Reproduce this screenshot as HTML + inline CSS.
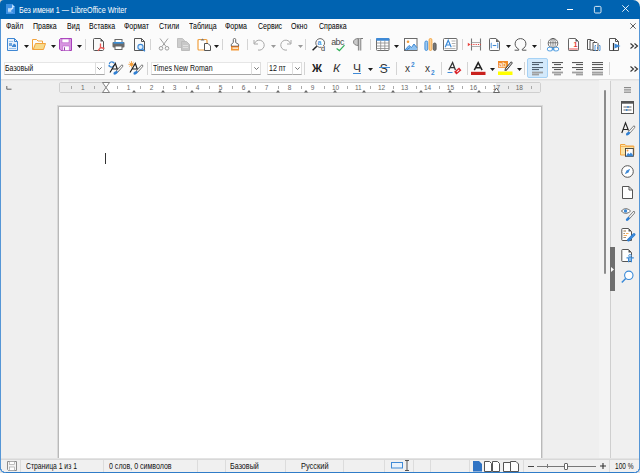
<!DOCTYPE html>
<html><head><meta charset="utf-8">
<style>
*{margin:0;padding:0;box-sizing:border-box}
html,body{width:640px;height:473px;overflow:hidden;background:#eeeeee;font-family:"Liberation Sans",sans-serif;position:relative}
.a{position:absolute}
.t{position:absolute;white-space:nowrap;line-height:1}
svg{overflow:visible}
</style></head><body>
<div class="a" style="left:0px;top:0px;width:8px;height:8px;background:#d9d4cc;"></div>
<div class="a" style="left:632px;top:0px;width:8px;height:8px;background:#f4f1ea;"></div>
<div class="a" style="left:0px;top:0px;width:640px;height:19px;background:#0063b1;border-radius:4px 7px 0 0"></div>
<div class="a" style="left:0px;top:19px;width:640px;height:60px;background:#fbfbfb;"></div>
<div class="a" style="left:0px;top:80px;width:611px;height:378px;background:#efefef;"></div>
<div class="a" style="left:611px;top:80px;width:29px;height:378px;background:#f0f0f0;"></div>
<div class="a" style="left:610px;top:80px;width:1px;height:378px;background:#cfcfcf;"></div>
<div class="a" style="left:0px;top:79px;width:640px;height:1px;background:#e0e0e0;"></div>
<div class="a" style="left:0px;top:80px;width:640px;height:1px;background:#e8e8e8;"></div>
<div class="a" style="left:0px;top:459px;width:640px;height:14px;background:#f0f0f0;"></div>
<div class="a" style="left:0px;top:458px;width:640px;height:1px;background:#e3e3e3;"></div>
<div class="a" style="left:0px;top:459px;width:640px;height:1px;background:#d8d8d8;"></div>
<svg class="a" style="left:6px;top:4px;" width="9" height="10" viewBox="0 0 9 10"><path d="M0 0H6L9 3V10H0Z" fill="#3a8fe2"/><path d="M6 0V3H9Z" fill="#9fd0fb"/><path d="M6.2 1.2L8.2 3L6.8 3.6Z" fill="#e6f3ff"/><rect x="2" y="4.2" width="3.3" height="3.6" fill="#b8dbfa"/><path d="M4.5 5L6.8 2.8L7.5 4.2L5.6 6Z" fill="#d8ecff"/><rect x="2" y="8.3" width="5" height="0.7" fill="#6aaeef"/></svg>
<div class="t" style="left:18.6px;top:6.45px;font-size:8.8px;letter-spacing:0px;color:#ffffff;transform:scaleX(0.8181818181818181);transform-origin:0 0;">Без имени 1 — LibreOffice Writer</div>
<div class="a" style="left:567px;top:9px;width:6px;height:1px;background:#ffffff;"></div>
<svg class="a" style="left:594px;top:5.5px;" width="8" height="8" viewBox="0 0 8 8"><rect x="0.4" y="0.4" width="6.6" height="6.6" rx="1.2" fill="none" stroke="#fff" stroke-width="0.85"/></svg>
<svg class="a" style="left:622px;top:5px;" width="7" height="7" viewBox="0 0 7 7"><path d="M0.3 0.3L6.7 6.7M6.7 0.3L0.3 6.7" stroke="#fff" stroke-width="0.9"/></svg>
<div class="t" style="left:5.6px;top:21.55px;font-size:8.8px;letter-spacing:0px;color:#000;transform:scaleX(0.7999999999999999);transform-origin:0 0;">Файл</div>
<div class="t" style="left:33px;top:21.55px;font-size:8.8px;letter-spacing:0px;color:#000;transform:scaleX(0.7999999999999999);transform-origin:0 0;">Правка</div>
<div class="t" style="left:67px;top:21.55px;font-size:8.8px;letter-spacing:0px;color:#000;transform:scaleX(0.7999999999999999);transform-origin:0 0;">Вид</div>
<div class="t" style="left:89px;top:21.55px;font-size:8.8px;letter-spacing:0px;color:#000;transform:scaleX(0.7999999999999999);transform-origin:0 0;">Вставка</div>
<div class="t" style="left:124px;top:21.55px;font-size:8.8px;letter-spacing:0px;color:#000;transform:scaleX(0.7999999999999999);transform-origin:0 0;">Формат</div>
<div class="t" style="left:159px;top:21.55px;font-size:8.8px;letter-spacing:0px;color:#000;transform:scaleX(0.7999999999999999);transform-origin:0 0;">Стили</div>
<div class="t" style="left:188.5px;top:21.55px;font-size:8.8px;letter-spacing:0px;color:#000;transform:scaleX(0.7999999999999999);transform-origin:0 0;">Таблица</div>
<div class="t" style="left:225px;top:21.55px;font-size:8.8px;letter-spacing:0px;color:#000;transform:scaleX(0.7999999999999999);transform-origin:0 0;">Форма</div>
<div class="t" style="left:257.5px;top:21.55px;font-size:8.8px;letter-spacing:0px;color:#000;transform:scaleX(0.7999999999999999);transform-origin:0 0;">Сервис</div>
<div class="t" style="left:290.5px;top:21.55px;font-size:8.8px;letter-spacing:0px;color:#000;transform:scaleX(0.7999999999999999);transform-origin:0 0;">Окно</div>
<div class="t" style="left:318.5px;top:21.55px;font-size:8.8px;letter-spacing:0px;color:#000;transform:scaleX(0.7999999999999999);transform-origin:0 0;">Справка</div>
<svg class="a" style="left:630px;top:23px;" width="6" height="6" viewBox="0 0 6 6"><path d="M0.3 0.3L5.7 5.7M5.7 0.3L0.3 5.7" stroke="#333" stroke-width="0.8"/></svg>
<svg class="a" style="left:7px;top:38px;" width="11" height="13" viewBox="0 0 11 13"><path d="M0.5 0.5H7.5L10.5 3.5V12.5H0.5Z" fill="#e8f1fb" stroke="#3f87d3" stroke-width="1"/><path d="M7.5 0.5V3.5H10.5" fill="none" stroke="#3f87d3" stroke-width="1"/><rect x="2" y="3" width="4" height="1" fill="#9cc3ea"/><rect x="2" y="5" width="3" height="3" fill="#6ea6de"/><path d="M5 8L7 5.5L9 7V9H5Z" fill="#3f87d3"/><rect x="2" y="10" width="7" height="1" fill="#9cc3ea"/></svg>
<svg class="a" style="left:24px;top:44.5px;" width="5" height="3" viewBox="0 0 5 3"><path d="M0 0H5L2.5 3Z" fill="#1b1b1b"/></svg>
<svg class="a" style="left:32px;top:39px;" width="14" height="11" viewBox="0 0 14 11"><path d="M0.5 1.5V10.5H11.5L13.5 4.5H3.5L1.5 10" fill="#f7d98a" stroke="#f2a33c" stroke-width="1" stroke-linejoin="round"/><path d="M0.5 10V0.5H4.5L6 2H10.5V4.5" fill="none" stroke="#f2a33c" stroke-width="1"/></svg>
<svg class="a" style="left:51px;top:44.5px;" width="5" height="3" viewBox="0 0 5 3"><path d="M0 0H5L2.5 3Z" fill="#1b1b1b"/></svg>
<svg class="a" style="left:59px;top:38px;" width="13" height="13" viewBox="0 0 13 13"><path d="M1.5 0.5H12.5V12.5H2L0.5 11V1.5Z" fill="#d796e0" stroke="#a640b9" stroke-width="1"/><rect x="3" y="1" width="7" height="3.8" fill="#ffffff" stroke="#b95fc9" stroke-width="0.6"/><rect x="3.8" y="8" width="6.4" height="4.5" fill="#ffffff" stroke="#b95fc9" stroke-width="0.6"/><rect x="5" y="9.3" width="1" height="3.2" fill="#9b3fae"/></svg>
<svg class="a" style="left:77px;top:44.5px;" width="5" height="3" viewBox="0 0 5 3"><path d="M0 0H5L2.5 3Z" fill="#1b1b1b"/></svg>
<div class="a" style="left:85px;top:39px;width:1px;height:11px;background:#d4d4d4;"></div>
<svg class="a" style="left:93px;top:38px;" width="12" height="13" viewBox="0 0 12 13"><path d="M1.5 0.5H7.5L10.5 3.5V11.5Q10.5 12.5 9.5 12.5H1.5Q0.5 12.5 0.5 11.5V1.5Q0.5 0.5 1.5 0.5Z" fill="#fafafa" stroke="#555" stroke-width="1"/><path d="M7.5 0.5V3.5H10.5" fill="#555"/><path d="M7.5 5.5V9.5L5 12.8M7.5 9.5L11.5 10.5" fill="none" stroke="#ea5b57" stroke-width="1.3"/></svg>
<svg class="a" style="left:112px;top:39px;" width="13" height="11" viewBox="0 0 13 11"><rect x="3" y="0.5" width="7" height="3" fill="#fff" stroke="#666"/><rect x="0.5" y="3" width="12" height="5.5" rx="1" fill="#6b6b6b"/><rect x="1.5" y="3" width="10" height="1.6" fill="#3b8fd8"/><rect x="3" y="7" width="7" height="3.5" fill="#fff" stroke="#666"/></svg>
<svg class="a" style="left:134px;top:38px;" width="12" height="14" viewBox="0 0 12 14"><path d="M0.5 0.5H7.5L10.5 3.5V12.5H0.5Z" fill="#fafafa" stroke="#555" stroke-width="1"/><path d="M7.5 0.5V3.5H10.5" fill="none" stroke="#555"/><circle cx="6.5" cy="9" r="2.6" fill="#e2effb" stroke="#3f8ad6" stroke-width="1.1"/><path d="M8.4 10.9L11 13.3" stroke="#3f8ad6" stroke-width="1.3"/></svg>
<div class="a" style="left:150px;top:39px;width:1px;height:11px;background:#d4d4d4;"></div>
<svg class="a" style="left:158px;top:38px;" width="12" height="13" viewBox="0 0 12 13"><path d="M2 0.5L8 8.5M10 0.5L4 8.5" stroke="#9e9e9e" stroke-width="1"/><circle cx="3" cy="10.3" r="1.8" fill="none" stroke="#9e9e9e"/><circle cx="9" cy="10.3" r="1.8" fill="none" stroke="#9e9e9e"/></svg>
<svg class="a" style="left:177px;top:38px;" width="13" height="13" viewBox="0 0 13 13"><path d="M0.5 0.5H5.5L7.5 2.5V9.5H0.5Z" fill="#cdcdcd" stroke="#c0c0c0"/><path d="M4.5 3.5H9.5L12.5 6.5V12.5H4.5Z" fill="#c8c8c8" stroke="#bcbcbc"/><rect x="6" y="7" width="5" height="0.8" fill="#e6e6e6"/><rect x="6" y="9" width="5" height="0.8" fill="#e6e6e6"/></svg>
<svg class="a" style="left:197px;top:38px;" width="14" height="13" viewBox="0 0 14 13"><rect x="1" y="1.5" width="9" height="10.5" rx="1" fill="#fff" stroke="#f0a040" stroke-width="1.2"/><path d="M3.5 2.5L5.5 0.5L7.5 2.5Z" fill="#777"/><path d="M7.5 5.5H11L13.5 8V12.5H7.5Z" fill="#fff" stroke="#555"/></svg>
<svg class="a" style="left:214px;top:45px;" width="5" height="3" viewBox="0 0 5 3"><path d="M0 0H5L2.5 3Z" fill="#1b1b1b"/></svg>
<div class="a" style="left:222px;top:39px;width:1px;height:11px;background:#d4d4d4;"></div>
<svg class="a" style="left:230px;top:38px;" width="10" height="13" viewBox="0 0 10 13"><path d="M3.3 4.6V1.6Q3.3 0.5 4.5 0.5Q5.7 0.5 5.7 1.6V4.6L8.6 6.3V8.2H1.3V6.3Z" fill="#fff" stroke="#666" stroke-width="1"/><rect x="1" y="8.2" width="8" height="4.3" fill="#f39a3a"/><rect x="1" y="8" width="8" height="0.8" fill="#b8642a"/><rect x="2.5" y="9.6" width="5.5" height="1.1" fill="#fff"/></svg>
<div class="a" style="left:247px;top:39px;width:1px;height:11px;background:#d4d4d4;"></div>
<svg class="a" style="left:253px;top:39px;" width="12" height="12" viewBox="0 0 12 12"><path d="M1 1V5H5" fill="none" stroke="#a8a8a8" stroke-width="1"/><path d="M1.5 4.5A5 5 0 1 1 5 11" fill="none" stroke="#a8a8a8" stroke-width="1"/></svg>
<svg class="a" style="left:271px;top:45px;" width="5" height="3" viewBox="0 0 5 3"><path d="M0 0H5L2.5 3Z" fill="#9a9a9a"/></svg>
<svg class="a" style="left:280px;top:39px;" width="12" height="12" viewBox="0 0 12 12"><path d="M11 1V5H7" fill="none" stroke="#a8a8a8" stroke-width="1"/><path d="M10.5 4.5A5 5 0 1 0 7 11" fill="none" stroke="#a8a8a8" stroke-width="1"/></svg>
<svg class="a" style="left:298px;top:45px;" width="5" height="3" viewBox="0 0 5 3"><path d="M0 0H5L2.5 3Z" fill="#9a9a9a"/></svg>
<div class="a" style="left:305px;top:39px;width:1px;height:11px;background:#d4d4d4;"></div>
<svg class="a" style="left:312px;top:38px;" width="14" height="13" viewBox="0 0 14 13"><path d="M11.2 8.2A4.4 4.4 0 1 0 9.5 9.2" fill="#fff" stroke="#555" stroke-width="0.9"/><path d="M4.8 8.2L0.6 12.2" stroke="#222" stroke-width="1.5"/><text x="5.6" y="7.3" font-size="7" font-weight="bold" font-family="Liberation Sans" fill="#4a9ae0">a</text><text x="9" y="12.7" font-size="7.4" font-family="Liberation Sans" fill="#333">d</text></svg>
<svg class="a" style="left:331px;top:37px;" width="15" height="14" viewBox="0 0 15 14"><text x="0.3" y="7.6" font-size="8.8" font-family="Liberation Sans" fill="#4a4a4a" letter-spacing="-0.6">abc</text><path d="M5.6 11.6L8.4 13.6L13.5 8.2" fill="none" stroke="#33b05a" stroke-width="1.2"/></svg>
<svg class="a" style="left:353px;top:38px;" width="11" height="13" viewBox="0 0 11 13"><path d="M5.3 0.5H10" stroke="#7a7a7a" stroke-width="1"/><path d="M5.3 0.5C2.4 0.5 0.5 2 0.5 4C0.5 6 2.4 7.5 5.3 7.5Z" fill="#c9c9c9" stroke="#7a7a7a" stroke-width="0.9"/><rect x="5.4" y="0.5" width="2.4" height="12" fill="#d0d0d0"/><path d="M5.4 0.5V12.5M7.8 0.5V12.5" stroke="#7a7a7a" stroke-width="0.9"/></svg>
<div class="a" style="left:370px;top:39px;width:1px;height:11px;background:#d4d4d4;"></div>
<svg class="a" style="left:376px;top:38px;" width="14" height="13" viewBox="0 0 14 13"><rect x="0.5" y="0.5" width="12.5" height="12" rx="1" fill="#fff" stroke="#6b6b6b"/><rect x="0" y="0" width="13.5" height="2.8" rx="1" fill="#3f8ad6"/><path d="M0.5 5H13M0.5 8H13M0.5 10.5H13M4.7 2.5V12.5M8.8 2.5V12.5" stroke="#8a8a8a" stroke-width="0.8"/></svg>
<svg class="a" style="left:394px;top:45px;" width="5" height="3" viewBox="0 0 5 3"><path d="M0 0H5L2.5 3Z" fill="#1b1b1b"/></svg>
<svg class="a" style="left:404px;top:38px;" width="14" height="13" viewBox="0 0 14 13"><rect x="0.5" y="0.5" width="12.5" height="12" fill="#fff" stroke="#6b6b6b"/><circle cx="4" cy="3.8" r="1.3" fill="#f29c38"/><path d="M1 12L5 7.5L7.5 9.5L10 6L13 9.8V12Z" fill="#8fc2f0"/><path d="M1 12L5 7.5L7.5 9.5L10 6L13 9.8M2.5 12L6 9.5" fill="none" stroke="#2f7fcf" stroke-width="0.9"/></svg>
<svg class="a" style="left:423.5px;top:38px;" width="13" height="13" viewBox="0 0 13 13"><rect x="0.9" y="3" width="2.8" height="9.5" rx="1.4" fill="#9cc8f0" stroke="#3a8ad8" stroke-width="0.9"/><rect x="5.1" y="0.5" width="2.8" height="12" rx="1.4" fill="#fbd29a" stroke="#f2a23c" stroke-width="0.9"/><rect x="9.3" y="5" width="2.8" height="7.5" rx="1.4" fill="#777" stroke="#555" stroke-width="0.9"/></svg>
<svg class="a" style="left:443px;top:38px;" width="15" height="13" viewBox="0 0 15 13"><rect x="0.5" y="0.5" width="13.5" height="12" rx="1" fill="#fff" stroke="#6b6b6b"/><path d="M2.2 9.3L5.2 2.2L8.2 9.3M3.3 7H7.1" fill="none" stroke="#3a8ad8" stroke-width="1.2"/><path d="M8.5 3H12.5M8.8 5.5H12.5M9.5 8H12.5M1.5 10.6H12.5" stroke="#9a9a9a" stroke-width="0.8"/></svg>
<div class="a" style="left:462px;top:39px;width:1px;height:11px;background:#d4d4d4;"></div>
<svg class="a" style="left:467px;top:38px;" width="15" height="13" viewBox="0 0 15 13"><path d="M4.5 0.5V12.5M13.5 0.5V12.5" stroke="#777" stroke-width="1.1"/><path d="M4.5 4.5H13.5M4.5 8.5H13.5" stroke="#999" stroke-width="0.8"/><path d="M4 6.5H14" stroke="#e8413c" stroke-width="1" stroke-dasharray="1.2 1.1"/><path d="M0.8 4.8L3.5 6.5L0.8 8.2Z" fill="#e8413c"/></svg>
<svg class="a" style="left:489px;top:38px;" width="11" height="13" viewBox="0 0 11 13"><path d="M1.2 0.5H7L10.5 4V11.8Q10.5 12.5 9.8 12.5H1.2Q0.5 12.5 0.5 11.8V1.2Q0.5 0.5 1.2 0.5Z" fill="#fff" stroke="#666"/><path d="M7 0.5V4H10.5" fill="#666"/><path d="M2.8 5.2H2.2V9.8H2.8M8.2 5.2H8.8V9.8H8.2" stroke="#3f8ad6" stroke-width="0.9" fill="none"/><path d="M3.7 7.5H7.3" stroke="#3f8ad6" stroke-width="1.1"/></svg>
<svg class="a" style="left:506px;top:45px;" width="5" height="3" viewBox="0 0 5 3"><path d="M0 0H5L2.5 3Z" fill="#1b1b1b"/></svg>
<svg class="a" style="left:514px;top:38px;" width="14" height="13" viewBox="0 0 14 13"><path d="M0.6 12.2H4.7V11.2C2.3 9.9 1.1 7.9 1.1 5.8C1.1 2.6 3.5 0.6 6.5 0.6C9.5 0.6 11.9 2.6 11.9 5.8C11.9 7.9 10.7 9.9 8.3 11.2V12.2H12.4" fill="none" stroke="#555" stroke-width="1"/></svg>
<svg class="a" style="left:532px;top:45px;" width="5" height="3" viewBox="0 0 5 3"><path d="M0 0H5L2.5 3Z" fill="#1b1b1b"/></svg>
<div class="a" style="left:540px;top:39px;width:1px;height:11px;background:#d4d4d4;"></div>
<svg class="a" style="left:546px;top:38px;" width="15" height="14" viewBox="0 0 15 14"><circle cx="7" cy="5.3" r="4.8" fill="#fff" stroke="#4a4a4a" stroke-width="0.8"/><path d="M2.2 4.8H11.8M7 0.5V10" stroke="#555" stroke-width="0.7" fill="none"/><ellipse cx="7" cy="5.3" rx="2.3" ry="4.8" fill="none" stroke="#555" stroke-width="0.7"/><rect x="1.3" y="9.3" width="5.4" height="3.6" rx="1.8" fill="#fff" stroke="#4a9ae0" stroke-width="0.95"/><rect x="7.3" y="9.3" width="5.4" height="3.6" rx="1.8" fill="#fff" stroke="#4a9ae0" stroke-width="0.95"/><path d="M5.5 11.1H8.7" stroke="#4a9ae0" stroke-width="1.1"/></svg>
<svg class="a" style="left:568px;top:38px;" width="12" height="13" viewBox="0 0 12 13"><path d="M1.2 0.5H7.5L10.5 3.5V11.8Q10.5 12.5 9.8 12.5H1.2Q0.5 12.5 0.5 11.8V1.2Q0.5 0.5 1.2 0.5Z" fill="#fff" stroke="#666"/><path d="M7.5 0.5V3.5H10.5" fill="#555"/><rect x="1.2" y="10" width="8.6" height="2" fill="#f3a9a9"/><text x="5.4" y="9.2" font-size="7.2" font-family="Liberation Sans" font-weight="bold" fill="#e63b36">1</text></svg>
<svg class="a" style="left:587px;top:38px;" width="14" height="13" viewBox="0 0 14 13"><path d="M0.5 1.5H4L5 2.5V11.5H0.5Z" fill="#fff" stroke="#555"/><path d="M3 2.5H6.5L7.5 3.5V12H3Z" fill="#fff" stroke="#555"/><path d="M6 4.5H10L11 5.5V12.5H6Z" fill="#fff" stroke="#555"/><path d="M9 7.5H8V12.5H9M12 7.5H13V12.5H12M10.5 9V11" stroke="#3f8ad6" stroke-width="0.9" fill="none"/></svg>
<svg class="a" style="left:609px;top:38px;" width="12" height="13" viewBox="0 0 12 13"><path d="M0.5 0.5H6.5L9.5 3.5V12.5H0.5Z" fill="#fff" stroke="#555"/><path d="M6.5 0.5V3.5H9.5" fill="none" stroke="#555"/><path d="M4.5 5V12.5" stroke="#333" stroke-width="1.2"/><path d="M5.5 5.5L11.5 8L5.5 10.5Z" fill="#3f8ad6"/></svg>
<svg class="a" style="left:630px;top:42.5px;" width="9" height="6" viewBox="0 0 9 6"><path d="M0.5 0.5L3.5 3L0.5 5.5M4.5 0.5L7.5 3L4.5 5.5" fill="none" stroke="#333" stroke-width="1.1"/></svg>
<div class="a" style="left:3.5px;top:62px;width:101.0px;height:13px;background:#ffffff;border:1px solid #e6e6e6;border-bottom:1px solid #a6a6a6"></div>
<div class="a" style="left:94.5px;top:62px;width:10px;height:13px;background:#ffffff;border:1px solid #dedede;border-bottom:1px solid #a6a6a6"></div>
<svg class="a" style="left:97.0px;top:67px;" width="5" height="3" viewBox="0 0 5 3"><path d="M0.3 0.3L2.5 2.5L4.7 0.3" fill="none" stroke="#555" stroke-width="0.8"/></svg>
<div class="t" style="left:5px;top:64.35px;font-size:8.8px;letter-spacing:0px;color:#111111;transform:scaleX(0.7999999999999999);transform-origin:0 0;">Базовый</div>
<svg class="a" style="left:108px;top:61px;" width="15" height="14" viewBox="0 0 15 14"><path d="M1.3 3.3A2.4 2.4 0 0 1 5.6 1.8M5.8 4A2.4 2.4 0 0 1 1.2 4.6" fill="none" stroke="#3f8ad6" stroke-width="1.2"/><circle cx="5.7" cy="1.6" r="0.9" fill="#3f8ad6"/><circle cx="1.2" cy="4.8" r="0.9" fill="#3f8ad6"/><path d="M2 11.5L7.3 2.5L9.6 9M4.2 8H8.6" fill="none" stroke="#222" stroke-width="1.2"/><path d="M14 5L9.3 10.2" stroke="#555" stroke-width="2.6" stroke-linecap="round"/><path d="M14 5L9.3 10.2" stroke="#fff" stroke-width="1.2" stroke-linecap="round"/><ellipse cx="7.6" cy="11.8" rx="2.4" ry="1.5" transform="rotate(-30 7.6 11.8)" fill="#2f7fd3"/></svg>
<svg class="a" style="left:128px;top:61px;" width="15" height="14" viewBox="0 0 15 14"><path d="M3.5 0V6.5M0.3 3.3H6.7M1.2 1L5.8 5.6M5.8 1L1.2 5.6" stroke="#f29c38" stroke-width="0.8"/><circle cx="3.5" cy="3.3" r="1.6" fill="#f29c38"/><path d="M2 11.5L7.3 2.5L9.6 9M4.2 8H8.6" fill="none" stroke="#222" stroke-width="1.2"/><path d="M14 5L9.3 10.2" stroke="#555" stroke-width="2.6" stroke-linecap="round"/><path d="M14 5L9.3 10.2" stroke="#fff" stroke-width="1.2" stroke-linecap="round"/><ellipse cx="7.6" cy="11.8" rx="2.4" ry="1.5" transform="rotate(-30 7.6 11.8)" fill="#2f7fd3"/></svg>
<div class="a" style="left:147px;top:62px;width:1px;height:13px;background:#d4d4d4;"></div>
<div class="a" style="left:150.5px;top:62px;width:110.5px;height:13px;background:#ffffff;border:1px solid #e6e6e6;border-bottom:1px solid #a6a6a6"></div>
<div class="a" style="left:251px;top:62px;width:10px;height:13px;background:#ffffff;border:1px solid #dedede;border-bottom:1px solid #a6a6a6"></div>
<svg class="a" style="left:253.5px;top:67px;" width="5" height="3" viewBox="0 0 5 3"><path d="M0.3 0.3L2.5 2.5L4.7 0.3" fill="none" stroke="#555" stroke-width="0.8"/></svg>
<div class="t" style="left:152.5px;top:64.35px;font-size:8.8px;letter-spacing:0px;color:#111111;transform:scaleX(0.7999999999999999);transform-origin:0 0;">Times New Roman</div>
<div class="a" style="left:267px;top:62px;width:35px;height:13px;background:#ffffff;border:1px solid #e6e6e6;border-bottom:1px solid #a6a6a6"></div>
<div class="a" style="left:292px;top:62px;width:10px;height:13px;background:#ffffff;border:1px solid #dedede;border-bottom:1px solid #a6a6a6"></div>
<svg class="a" style="left:294.5px;top:67px;" width="5" height="3" viewBox="0 0 5 3"><path d="M0.3 0.3L2.5 2.5L4.7 0.3" fill="none" stroke="#555" stroke-width="0.8"/></svg>
<div class="t" style="left:269px;top:64.35px;font-size:8.8px;letter-spacing:0px;color:#111111;transform:scaleX(0.7999999999999999);transform-origin:0 0;">12 пт</div>
<div class="a" style="left:304px;top:62px;width:1px;height:13px;background:#d4d4d4;"></div>
<div class="t" style="left:312px;top:63.31px;font-size:10.5px;letter-spacing:0px;color:#222;transform:scaleX(1.05);transform-origin:0 0;font-weight:bold">Ж</div>
<div class="t" style="left:333.3px;top:63.31px;font-size:10.5px;letter-spacing:0px;color:#333;transform:scaleX(1.15);transform-origin:0 0;font-style:italic">К</div>
<div class="t" style="left:352.8px;top:63.31px;font-size:10.5px;letter-spacing:0px;color:#333;transform:scaleX(1.15);transform-origin:0 0;">Ч</div>
<div class="a" style="left:353px;top:73px;width:7.5px;height:1px;background:#3f8ad6;"></div>
<svg class="a" style="left:368px;top:68px;" width="5" height="3" viewBox="0 0 5 3"><path d="M0 0H5L2.5 3Z" fill="#1b1b1b"/></svg>
<div class="t" style="left:379.8px;top:62.84px;font-size:12px;letter-spacing:0px;color:#333;transform:scaleX(1.0);transform-origin:0 0;">S</div>
<div class="a" style="left:379px;top:67px;width:11px;height:1px;background:#3f8ad6;"></div>
<div class="a" style="left:396px;top:62px;width:1px;height:13px;background:#d4d4d4;"></div>
<div class="t" style="left:405px;top:63.53px;font-size:10px;letter-spacing:0px;color:#333;transform:scaleX(1);transform-origin:0 0;">x</div>
<div class="t" style="left:411px;top:61.50px;font-size:6.5px;letter-spacing:0px;color:#3f8ad6;transform:scaleX(1);transform-origin:0 0;font-weight:bold">2</div>
<div class="t" style="left:425px;top:63.53px;font-size:10px;letter-spacing:0px;color:#333;transform:scaleX(1);transform-origin:0 0;">x</div>
<div class="t" style="left:431px;top:69.50px;font-size:6.5px;letter-spacing:0px;color:#3f8ad6;transform:scaleX(1);transform-origin:0 0;font-weight:bold">2</div>
<div class="a" style="left:441px;top:62px;width:1px;height:13px;background:#d4d4d4;"></div>
<svg class="a" style="left:447px;top:61px;" width="15" height="15" viewBox="0 0 15 15"><path d="M1.8 9L5.6 1.5L8.4 9M3 6.6H7.6" fill="none" stroke="#333" stroke-width="1.3"/><path d="M0.5 11.5H5.5" stroke="#3f8ad6" stroke-width="1"/><rect x="7.5" y="8.2" width="6.5" height="3.6" transform="rotate(-40 10.7 10)" fill="#d9242b"/><rect x="9.5" y="9.6" width="3" height="0.9" transform="rotate(-40 10.7 10)" fill="#fff"/></svg>
<div class="a" style="left:467px;top:62px;width:1px;height:13px;background:#d4d4d4;"></div>
<svg class="a" style="left:471px;top:61px;" width="15" height="15" viewBox="0 0 15 15"><path d="M3.3 9.2L7.2 1.6L11.1 9.2M4.6 6.8H9.8" fill="none" stroke="#222" stroke-width="1.5"/><rect x="0" y="10.8" width="14.5" height="3.2" fill="#c9211e"/></svg>
<svg class="a" style="left:490px;top:68px;" width="5" height="3" viewBox="0 0 5 3"><path d="M0 0H5L2.5 3Z" fill="#1b1b1b"/></svg>
<svg class="a" style="left:498px;top:61px;" width="15" height="15" viewBox="0 0 15 15"><rect x="0" y="0" width="10" height="6.8" fill="#f28c28"/><text x="0.8" y="5.9" font-size="6.8" font-family="Liberation Sans" fill="#fff">ab</text><path d="M13.3 2L8 8.3" stroke="#444" stroke-width="2.6" stroke-linecap="round"/><path d="M13.3 2L8 8.3" stroke="#fff" stroke-width="1" stroke-linecap="round"/><path d="M7.2 8.2L6.3 10L8.2 9.2Z" fill="#333"/><rect x="0" y="10.5" width="14.5" height="3.5" fill="#ffff00"/></svg>
<svg class="a" style="left:517px;top:68px;" width="5" height="3" viewBox="0 0 5 3"><path d="M0 0H5L2.5 3Z" fill="#1b1b1b"/></svg>
<div class="a" style="left:524px;top:62px;width:1px;height:13px;background:#d4d4d4;"></div>
<div class="a" style="left:527px;top:58px;width:21px;height:20px;background:#d3e9fb;border:1px solid #a6d2f5;border-radius:2px"></div>
<svg class="a" style="left:532px;top:62px;" width="11" height="13" viewBox="0 0 11 13"><rect x="0" y="0" width="11" height="1.1" fill="#4f5f6f"/><rect x="0" y="2" width="7" height="1.1" fill="#4f5f6f"/><rect x="0" y="5" width="11" height="1.1" fill="#4f5f6f"/><rect x="0" y="7" width="7" height="1.1" fill="#4f5f6f"/><rect x="0" y="9.6" width="11" height="1.8" fill="#a0a0a0"/><rect x="0" y="11.6" width="7" height="1.8" fill="#a0a0a0"/></svg>
<svg class="a" style="left:552px;top:62px;" width="11" height="13" viewBox="0 0 11 13"><rect x="0.0" y="0" width="11" height="1.1" fill="#5a5a5a"/><rect x="2.0" y="2" width="7" height="1.1" fill="#5a5a5a"/><rect x="0.0" y="5" width="11" height="1.1" fill="#5a5a5a"/><rect x="2.0" y="7" width="7" height="1.1" fill="#5a5a5a"/><rect x="0.0" y="9.6" width="11" height="1.8" fill="#a0a0a0"/><rect x="2.0" y="11.6" width="7" height="1.8" fill="#a0a0a0"/></svg>
<svg class="a" style="left:572px;top:62px;" width="11" height="13" viewBox="0 0 11 13"><rect x="0" y="0" width="11" height="1.1" fill="#5a5a5a"/><rect x="4" y="2" width="7" height="1.1" fill="#5a5a5a"/><rect x="0" y="5" width="11" height="1.1" fill="#5a5a5a"/><rect x="4" y="7" width="7" height="1.1" fill="#5a5a5a"/><rect x="0" y="9.6" width="11" height="1.8" fill="#a0a0a0"/><rect x="4" y="11.6" width="7" height="1.8" fill="#a0a0a0"/></svg>
<svg class="a" style="left:592px;top:62px;" width="11" height="13" viewBox="0 0 11 13"><rect x="0" y="0" width="11" height="1.1" fill="#5a5a5a"/><rect x="0" y="2" width="11" height="1.1" fill="#5a5a5a"/><rect x="0" y="5" width="11" height="1.1" fill="#5a5a5a"/><rect x="0" y="7" width="11" height="1.1" fill="#5a5a5a"/><rect x="0" y="9.6" width="11" height="1.8" fill="#a0a0a0"/><rect x="0" y="11.6" width="11" height="1.8" fill="#a0a0a0"/></svg>
<div class="a" style="left:609px;top:62px;width:1px;height:13px;background:#d4d4d4;"></div>
<svg class="a" style="left:630px;top:65.5px;" width="9" height="6" viewBox="0 0 9 6"><path d="M0.5 0.5L3.5 3L0.5 5.5M4.5 0.5L7.5 3L4.5 5.5" fill="none" stroke="#333" stroke-width="1.1"/></svg>
<div class="a" style="left:59px;top:82px;width:482px;height:11px;background:#ffffff;border:1px solid #cfcfcf;border-radius:2px"></div>
<div class="a" style="left:60px;top:83px;width:45.5px;height:9px;background:#ededed;"></div>
<div class="a" style="left:496px;top:83px;width:44px;height:9px;background:#ededed;"></div>
<div class="a" style="left:71.0px;top:86px;width:0.8px;height:3px;background:#aaaaaa;"></div>
<div class="t" style="left:80.93px;top:85px;font-size:6.5px;color:#666">1</div>
<div class="a" style="left:94.0px;top:86px;width:0.8px;height:3px;background:#aaaaaa;"></div>
<div class="a" style="left:117.0px;top:86px;width:0.8px;height:3px;background:#aaaaaa;"></div>
<div class="t" style="left:126.87px;top:85px;font-size:6.5px;color:#666">1</div>
<div class="a" style="left:140.0px;top:86px;width:0.8px;height:3px;background:#aaaaaa;"></div>
<div class="t" style="left:149.84px;top:85px;font-size:6.5px;color:#666">2</div>
<div class="a" style="left:163.0px;top:86px;width:0.8px;height:3px;background:#aaaaaa;"></div>
<div class="t" style="left:172.81px;top:85px;font-size:6.5px;color:#666">3</div>
<div class="a" style="left:186.0px;top:86px;width:0.8px;height:3px;background:#aaaaaa;"></div>
<div class="t" style="left:195.78px;top:85px;font-size:6.5px;color:#666">4</div>
<div class="a" style="left:209.0px;top:86px;width:0.8px;height:3px;background:#aaaaaa;"></div>
<div class="t" style="left:218.75px;top:85px;font-size:6.5px;color:#666">5</div>
<div class="a" style="left:232.0px;top:86px;width:0.8px;height:3px;background:#aaaaaa;"></div>
<div class="t" style="left:241.72px;top:85px;font-size:6.5px;color:#666">6</div>
<div class="a" style="left:255.0px;top:86px;width:0.8px;height:3px;background:#aaaaaa;"></div>
<div class="t" style="left:264.69px;top:85px;font-size:6.5px;color:#666">7</div>
<div class="a" style="left:278.0px;top:86px;width:0.8px;height:3px;background:#aaaaaa;"></div>
<div class="t" style="left:287.66px;top:85px;font-size:6.5px;color:#666">8</div>
<div class="a" style="left:300.5px;top:86px;width:0.8px;height:3px;background:#aaaaaa;"></div>
<div class="t" style="left:310.63px;top:85px;font-size:6.5px;color:#666">9</div>
<div class="a" style="left:323.5px;top:86px;width:0.8px;height:3px;background:#aaaaaa;"></div>
<div class="t" style="left:332.00px;top:85px;font-size:6.5px;color:#666">10</div>
<div class="a" style="left:346.5px;top:86px;width:0.8px;height:3px;background:#aaaaaa;"></div>
<div class="t" style="left:354.97px;top:85px;font-size:6.5px;color:#666">11</div>
<div class="a" style="left:369.5px;top:86px;width:0.8px;height:3px;background:#aaaaaa;"></div>
<div class="t" style="left:377.94px;top:85px;font-size:6.5px;color:#666">12</div>
<div class="a" style="left:392.5px;top:86px;width:0.8px;height:3px;background:#aaaaaa;"></div>
<div class="t" style="left:400.91px;top:85px;font-size:6.5px;color:#666">13</div>
<div class="a" style="left:415.5px;top:86px;width:0.8px;height:3px;background:#aaaaaa;"></div>
<div class="t" style="left:423.88px;top:85px;font-size:6.5px;color:#666">14</div>
<div class="a" style="left:438.5px;top:86px;width:0.8px;height:3px;background:#aaaaaa;"></div>
<div class="t" style="left:446.85px;top:85px;font-size:6.5px;color:#666">15</div>
<div class="a" style="left:461.5px;top:86px;width:0.8px;height:3px;background:#aaaaaa;"></div>
<div class="t" style="left:469.82px;top:85px;font-size:6.5px;color:#666">16</div>
<div class="a" style="left:484.5px;top:86px;width:0.8px;height:3px;background:#aaaaaa;"></div>
<div class="t" style="left:492.79px;top:85px;font-size:6.5px;color:#666">17</div>
<div class="a" style="left:507.5px;top:86px;width:0.8px;height:3px;background:#aaaaaa;"></div>
<div class="t" style="left:515.76px;top:85px;font-size:6.5px;color:#666">18</div>
<div class="a" style="left:530.5px;top:86px;width:0.8px;height:3px;background:#aaaaaa;"></div>
<svg class="a" style="left:132.2px;top:90px;" width="4" height="2.5" viewBox="0 0 4 2.5"><path d="M0 2.5H4L2 0Z" fill="#666"/></svg>
<svg class="a" style="left:160.9px;top:90px;" width="4" height="2.5" viewBox="0 0 4 2.5"><path d="M0 2.5H4L2 0Z" fill="#666"/></svg>
<svg class="a" style="left:189.6px;top:90px;" width="4" height="2.5" viewBox="0 0 4 2.5"><path d="M0 2.5H4L2 0Z" fill="#666"/></svg>
<svg class="a" style="left:218.3px;top:90px;" width="4" height="2.5" viewBox="0 0 4 2.5"><path d="M0 2.5H4L2 0Z" fill="#666"/></svg>
<svg class="a" style="left:247.0px;top:90px;" width="4" height="2.5" viewBox="0 0 4 2.5"><path d="M0 2.5H4L2 0Z" fill="#666"/></svg>
<svg class="a" style="left:275.7px;top:90px;" width="4" height="2.5" viewBox="0 0 4 2.5"><path d="M0 2.5H4L2 0Z" fill="#666"/></svg>
<svg class="a" style="left:304.4px;top:90px;" width="4" height="2.5" viewBox="0 0 4 2.5"><path d="M0 2.5H4L2 0Z" fill="#666"/></svg>
<svg class="a" style="left:333.1px;top:90px;" width="4" height="2.5" viewBox="0 0 4 2.5"><path d="M0 2.5H4L2 0Z" fill="#666"/></svg>
<svg class="a" style="left:361.8px;top:90px;" width="4" height="2.5" viewBox="0 0 4 2.5"><path d="M0 2.5H4L2 0Z" fill="#666"/></svg>
<svg class="a" style="left:390.5px;top:90px;" width="4" height="2.5" viewBox="0 0 4 2.5"><path d="M0 2.5H4L2 0Z" fill="#666"/></svg>
<svg class="a" style="left:419.2px;top:90px;" width="4" height="2.5" viewBox="0 0 4 2.5"><path d="M0 2.5H4L2 0Z" fill="#666"/></svg>
<svg class="a" style="left:447.9px;top:90px;" width="4" height="2.5" viewBox="0 0 4 2.5"><path d="M0 2.5H4L2 0Z" fill="#666"/></svg>
<svg class="a" style="left:476.59999999999997px;top:90px;" width="4" height="2.5" viewBox="0 0 4 2.5"><path d="M0 2.5H4L2 0Z" fill="#666"/></svg>
<svg class="a" style="left:102px;top:82px;" width="8" height="11" viewBox="0 0 8 11"><path d="M0.5 0.5H7.5L4 5.5L7.5 10.5H0.5L4 5.5Z" fill="#fff" stroke="#666" stroke-width="0.8" stroke-linejoin="round"/></svg>
<svg class="a" style="left:492.5px;top:87px;" width="7" height="6" viewBox="0 0 7 6"><path d="M0.5 5.5H6.5L3.5 1Z" fill="#fff" stroke="#555" stroke-width="0.9"/></svg>
<svg class="a" style="left:5.5px;top:86px;" width="6" height="4" viewBox="0 0 6 4"><path d="M0.8 0V3.2H5.5" fill="none" stroke="#555" stroke-width="0.9"/></svg>
<div class="a" style="left:57px;top:105px;width:486px;height:353px;background:#d9d9d9;"></div>
<div class="a" style="left:58px;top:106px;width:484px;height:352px;background:#b9b9b9;"></div>
<div class="a" style="left:59px;top:107px;width:482px;height:351px;background:#ffffff;"></div>
<div class="a" style="left:105px;top:153px;width:1px;height:11px;background:#333333;"></div>
<div class="a" style="left:599px;top:80px;width:11px;height:378px;background:#f3f3f3;"></div>
<div class="a" style="left:604px;top:90px;width:2px;height:184px;background:#8c8c8c;border-radius:1px"></div>
<div class="a" style="left:610px;top:247px;width:4.5px;height:44px;background:#6e6e6e;"></div>
<svg class="a" style="left:611px;top:266.5px;" width="3" height="5" viewBox="0 0 3 5"><path d="M0 0L3 2.5L0 5Z" fill="#fff"/></svg>
<svg class="a" style="left:624px;top:87px;" width="7" height="6" viewBox="0 0 7 6"><rect x="0" y="0" width="7" height="1.2" fill="#8a8a8a"/><rect x="0" y="2.3" width="7" height="1.2" fill="#8a8a8a"/><rect x="0" y="4.6" width="7" height="1.2" fill="#8a8a8a"/></svg>
<svg class="a" style="left:621px;top:101px;" width="13" height="13" viewBox="0 0 13 13"><rect x="0.5" y="0.5" width="12" height="12" fill="#fff" stroke="#555"/><rect x="0.5" y="0.5" width="12" height="2.2" fill="#555"/><path d="M2.5 6H10.5M2.5 9H10.5" stroke="#555" stroke-width="0.9"/><rect x="6.3" y="5" width="1.4" height="2" fill="#3f8ad6"/><rect x="5" y="8" width="1.4" height="2" fill="#3f8ad6"/></svg>
<svg class="a" style="left:621px;top:122px;" width="14" height="14" viewBox="0 0 14 14"><path d="M0.8 11L4.5 0.8L7.5 8.5M2 7.5H6.5" fill="none" stroke="#222" stroke-width="1.1"/><path d="M13 5L8.5 10" stroke="#555" stroke-width="2.6" stroke-linecap="round"/><path d="M13 5L8.5 10" stroke="#fff" stroke-width="1.2" stroke-linecap="round"/><ellipse cx="7" cy="11.6" rx="2.3" ry="1.4" transform="rotate(-35 7 11.6)" fill="#2f7fd3"/></svg>
<svg class="a" style="left:620px;top:144px;" width="15" height="13" viewBox="0 0 15 13"><path d="M0.5 0.5H5L6.5 2H13.8V11H0.5Z" fill="#fbe3a6" stroke="#f3a43f" stroke-width="1"/><path d="M0.5 2.5H13.8" stroke="#f3a43f" stroke-width="0.7"/><rect x="5.5" y="4.5" width="7.8" height="7.8" fill="#fff" stroke="#3a3a3a" stroke-width="0.9"/><circle cx="7.5" cy="6.6" r="1" fill="#f39a3a"/><path d="M6 12.2L8 8.8L9.4 10.3L10.9 8.6L12.9 11V12.2Z" fill="#3a87d6"/></svg>
<svg class="a" style="left:621px;top:165px;" width="13" height="13" viewBox="0 0 13 13"><circle cx="6.5" cy="6.5" r="5.8" fill="#fff" stroke="#555" stroke-width="1"/><path d="M9.2 3.8L7.5 7.5L3.8 9.2L5.5 5.5Z" fill="#3f8ad6"/></svg>
<svg class="a" style="left:622px;top:186px;" width="11" height="13" viewBox="0 0 11 13"><path d="M0.5 0.5H7L10.5 4V12.5H0.5Z" fill="#fff" stroke="#555"/><path d="M7 0.5V4H10.5" fill="none" stroke="#555"/></svg>
<svg class="a" style="left:621px;top:207px;" width="14" height="14" viewBox="0 0 14 14"><path d="M0.5 4C2.5 1 7 1 9.5 4C7 7 2.5 7 0.5 4Z" fill="#fff" stroke="#555" stroke-width="0.9"/><circle cx="4.5" cy="4" r="1.7" fill="#3f8ad6"/><path d="M12.8 5.5L8.3 10.5" stroke="#555" stroke-width="2.6" stroke-linecap="round"/><path d="M12.8 5.5L8.3 10.5" stroke="#fff" stroke-width="1.2" stroke-linecap="round"/><ellipse cx="6.8" cy="12" rx="2.3" ry="1.4" transform="rotate(-40 6.8 12)" fill="#2f7fd3"/></svg>
<svg class="a" style="left:621px;top:228px;" width="15" height="14" viewBox="0 0 15 14"><path d="M1.5 0.5H7.5L10.5 3.5V12.5H1.5Q0.8 12.5 0.8 11.8V1.2Q0.8 0.5 1.5 0.5Z" fill="#fff" stroke="#555" stroke-width="1"/><path d="M7.5 0.5V3.5H10.5" fill="#555"/><path d="M2.5 3H5M2.5 5.5H4M5 5.5H7.5M2.5 7.5H6M2.5 9.5H5" stroke="#f29c38" stroke-width="0.8"/><path d="M2.5 3H5M2.5 5.5H4M2.5 9.5H5" stroke="#888" stroke-width="0.8"/><path d="M13 6.5L7.5 12" stroke="#2f7fd3" stroke-width="3" stroke-linecap="round"/><path d="M13 6.5L7.5 12" stroke="#6fb0ec" stroke-width="0.8" stroke-dasharray="1 1"/></svg>
<svg class="a" style="left:621px;top:249px;" width="15" height="14" viewBox="0 0 15 14"><path d="M1.5 0.5H7.5L10.5 3.5V12.5H1.5Q0.8 12.5 0.8 11.8V1.2Q0.8 0.5 1.5 0.5Z" fill="#fff" stroke="#555" stroke-width="1"/><path d="M7.5 0.5V3.5H10.5" fill="#555"/><circle cx="9" cy="6.8" r="1.3" fill="#fff" stroke="#3a8ad8" stroke-width="0.9"/><path d="M5.5 8.8H12.8M7.6 8.8V13.3M10.4 8.8V13.3M7.6 11H10.4" stroke="#3a8ad8" stroke-width="1.2" fill="none"/></svg>
<svg class="a" style="left:621px;top:270px;" width="14" height="14" viewBox="0 0 14 14"><circle cx="7.8" cy="5.3" r="4.2" fill="#fff" stroke="#3a8ad8" stroke-width="1.1"/><path d="M4.7 8.4L0.8 12.6" stroke="#3a8ad8" stroke-width="1.4"/></svg>
<svg class="a" style="left:7px;top:461px;" width="10" height="10" viewBox="0 0 10 10"><path d="M0.5 0.5H9.5V9.5H1.5L0.5 8.5Z" fill="#f4f4f4" stroke="#8a8a8a"/><rect x="2.5" y="0.5" width="5" height="3" fill="#fff" stroke="#9a9a9a" stroke-width="0.6"/><rect x="2.5" y="6" width="5" height="3.5" fill="#fff" stroke="#9a9a9a" stroke-width="0.6"/></svg>
<div class="a" style="left:19.5px;top:460px;width:1px;height:12px;background:#dcdcdc;"></div>
<div class="a" style="left:103px;top:460px;width:1px;height:12px;background:#dcdcdc;"></div>
<div class="a" style="left:196.5px;top:460px;width:1px;height:12px;background:#dcdcdc;"></div>
<div class="a" style="left:224.5px;top:460px;width:1px;height:12px;background:#dcdcdc;"></div>
<div class="a" style="left:284.5px;top:460px;width:1px;height:12px;background:#dcdcdc;"></div>
<div class="a" style="left:343px;top:460px;width:1px;height:12px;background:#dcdcdc;"></div>
<div class="a" style="left:384px;top:460px;width:1px;height:12px;background:#dcdcdc;"></div>
<div class="a" style="left:413px;top:460px;width:1px;height:12px;background:#dcdcdc;"></div>
<div class="a" style="left:430px;top:460px;width:1px;height:12px;background:#dcdcdc;"></div>
<div class="a" style="left:469px;top:460px;width:1px;height:12px;background:#dcdcdc;"></div>
<div class="a" style="left:523px;top:460px;width:1px;height:12px;background:#dcdcdc;"></div>
<div class="a" style="left:609px;top:460px;width:1px;height:12px;background:#dcdcdc;"></div>
<div class="t" style="left:25.6px;top:462.15px;font-size:8.8px;letter-spacing:0px;color:#111111;transform:scaleX(0.7727272727272726);transform-origin:0 0;">Страница 1 из 1</div>
<div class="t" style="left:108.5px;top:462.15px;font-size:8.8px;letter-spacing:0px;color:#111111;transform:scaleX(0.7999999999999999);transform-origin:0 0;">0 слов, 0 символов</div>
<div class="t" style="left:230px;top:462.15px;font-size:8.8px;letter-spacing:0px;color:#111111;transform:scaleX(0.8181818181818181);transform-origin:0 0;">Базовый</div>
<div class="t" style="left:300.5px;top:462.15px;font-size:8.8px;letter-spacing:0px;color:#111111;transform:scaleX(0.8454545454545455);transform-origin:0 0;">Русский</div>
<div class="t" style="left:614.5px;top:462.15px;font-size:8.8px;letter-spacing:0px;color:#111111;transform:scaleX(0.7454545454545454);transform-origin:0 0;">100 %</div>
<svg class="a" style="left:391px;top:462px;" width="12" height="7" viewBox="0 0 12 7"><rect x="0.5" y="0.5" width="11" height="5.5" fill="#eaf3fc" stroke="#3f8ad6" stroke-width="1"/></svg>
<svg class="a" style="left:404.5px;top:460px;" width="4" height="11" viewBox="0 0 4 11"><path d="M0 0.5H4M0 10.5H4M2 0.5V10.5" stroke="#444" stroke-width="0.9"/></svg>
<svg class="a" style="left:473px;top:461px;" width="9" height="11" viewBox="0 0 9 11"><path d="M0 0H6L9 3V10.5H0Z" fill="#2f73c4"/></svg>
<svg class="a" style="left:484px;top:461px;" width="17" height="11" viewBox="0 0 17 11"><path d="M0.5 0.5H5.5L7.5 2.5V10.5H0.5Z" fill="#fff" stroke="#555"/><path d="M8.5 0.5H13.5L15.5 2.5V10.5H8.5Z" fill="#fff" stroke="#555"/></svg>
<svg class="a" style="left:503px;top:461px;" width="16" height="11" viewBox="0 0 16 11"><path d="M0.5 1.5H7.5V10.5H0.5Z" fill="#fff" stroke="#555"/><path d="M7.5 0.5H13L15.5 3V10.5H7.5Z" fill="#fff" stroke="#555"/></svg>
<div class="a" style="left:527.5px;top:465.5px;width:6px;height:1.3px;background:#444;"></div>
<div class="a" style="left:537px;top:465.8px;width:59px;height:0.9px;background:#777;"></div>
<div class="a" style="left:547.2px;top:464px;width:0.9px;height:4px;background:#777;"></div>
<div class="a" style="left:564px;top:463px;width:3.5px;height:6.5px;background:#fff;border:1px solid #666;border-radius:1px"></div>
<svg class="a" style="left:600px;top:463px;" width="6" height="6" viewBox="0 0 6 6"><path d="M0 3H6M3 0V6" stroke="#333" stroke-width="1.1"/></svg>
<div class="a" style="left:0px;top:19px;width:1px;height:454px;background:#5596d6;"></div>
<div class="a" style="left:639px;top:19px;width:1px;height:454px;background:#5596d6;"></div>
<div class="a" style="left:0px;top:472px;width:640px;height:1px;background:#2f7cc8;"></div>
<div class="a" style="left:0px;top:467px;width:6px;height:6px;background:radial-gradient(circle at 6px 0px, transparent 5px, #4b8fd4 5.2px, #4b8fd4 6.2px, #e4e4e4 6.6px);"></div>
<div class="a" style="left:634px;top:467px;width:6px;height:6px;background:radial-gradient(circle at 0px 0px, transparent 5px, #4b8fd4 5.2px, #4b8fd4 6.2px, #e4e4e4 6.6px);"></div>
</body></html>
